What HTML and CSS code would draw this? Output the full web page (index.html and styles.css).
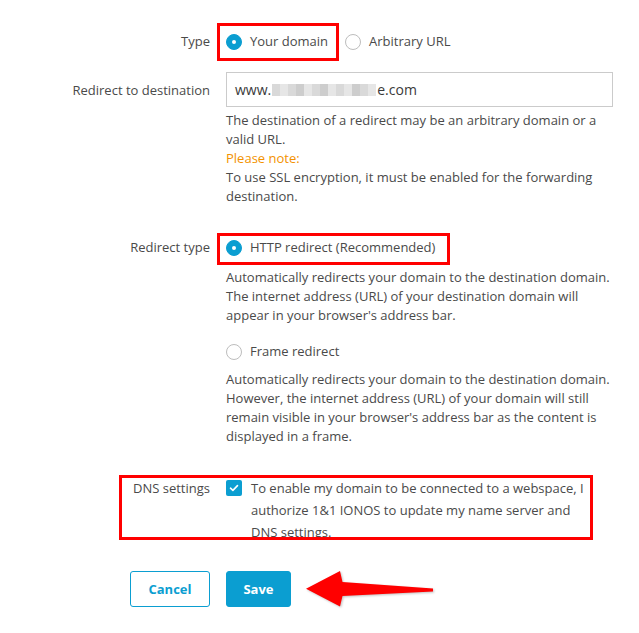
FILE: index.html
```html
<!DOCTYPE html>
<html>
<head>
    <title>Domain forwarding</title>
    <link rel="stylesheet" href="styles.css">
</head>
<body>
    <div class="form">
        <div class="row">
            <div class="label">Type</div>
            <div class="field options">
                <label class="opt marked mark-type"><span class="radio on"></span>Your domain</label>
                <label class="opt"><span class="radio"></span>Arbitrary URL</label>
            </div>
        </div>

        <div class="row row-dest">
            <div class="label label-input">Redirect to destination</div>
            <div class="field">
                <div class="input">www.<span class="blur"><i class="b1"></i><i class="b2"></i><i class="b1"></i><i class="b3"></i><i class="b2"></i><i class="b1"></i><i class="b3"></i><i class="b2"></i><i class="b1"></i><i class="b2"></i><i class="b3"></i><i class="b1"></i><i class="b2"></i></span>e.com</div>
                <p class="help">The destination of a redirect may be an arbitrary domain or a valid URL.</p>
                <p class="help note">Please note:</p>
                <p class="help">To use SSL encryption, it must be enabled for the forwarding destination.</p>
            </div>
        </div>

        <div class="row row-type">
            <div class="label">Redirect type</div>
            <div class="field">
                <label class="opt marked mark-redirect"><span class="radio on"></span>HTTP redirect (Recommended)</label>
                <p class="desc">Automatically redirects your domain to the destination domain. The internet address (URL) of your destination domain will appear in your browser's address bar.</p>
                <label class="opt opt-frame"><span class="radio"></span>Frame redirect</label>
                <p class="desc desc-frame">Automatically redirects your domain to the destination domain. However, the internet address (URL) of your domain will still remain visible in your browser's address bar as the content is displayed in a frame.</p>
            </div>
        </div>

        <div class="row row-dns">
            <div class="label">DNS settings</div>
            <div class="field check-line">
                <span class="checkbox">
                    <svg width="10" height="8" viewBox="0 0 10 8"><path d="M1.5 4.2 L3.9 6.4 L8.5 1.6" fill="none" stroke="#fff" stroke-width="1.6" stroke-linecap="round" stroke-linejoin="round"/></svg>
                </span>
                <span>To enable my domain to be connected to a webspace, I authorize 1&amp;1 IONOS to update my name server and DNS settings.</span>
            </div>
        </div>

        <div class="actions">
            <button class="btn btn-cancel">Cancel</button>
            <button class="btn btn-save">Save</button>
            <svg class="arrow" width="134" height="40" viewBox="0 0 134 40">
                <path d="M2 19.7 L36 2 L38.5 13 L129 19.5 L129 22.5 L38.5 27 L36 37.5 Z" fill="#f00"/>
            </svg>
        </div>
    </div>
</body>
</html>
```

FILE: styles.css
```css
body {
    margin: 0;
    font-family: "Open Sans", sans-serif;
    font-size: 13px;
    color: #4a4a4a;
    background: #fff;
}
.form {
    padding-top: 32px;
}
.row {
    display: grid;
    grid-template-columns: 210px 387px;
    column-gap: 16px;
    line-height: 19px;
    position: relative;
}
.label {
    text-align: right;
}
.options {
    display: flex;
    gap: 17px;
}
.opt {
    display: flex;
    align-items: center;
    gap: 8px;
    height: 19px;
    width: max-content;
    position: relative;
}
.radio {
    width: 16px;
    height: 16px;
    box-sizing: border-box;
    border-radius: 50%;
    border: 1px solid #bdbdbd;
    background: #fff;
    position: relative;
}
.radio.on {
    border-color: #0b9ed1;
    background: #0b9ed1;
}
.radio.on::after {
    content: '';
    position: absolute;
    left: 5px;
    top: 5px;
    width: 4px;
    height: 4px;
    border-radius: 50%;
    background: #fff;
}

/* red annotation frames */
.marked::after,
.row-dns::after {
    content: '';
    position: absolute;
    border: 3px solid #f00;
}
.mark-type::after {
    left: -9px;
    right: -11px;
    top: -9px;
    bottom: -10px;
}
.mark-redirect::after {
    left: -9px;
    right: -15px;
    top: -5px;
    bottom: -8px;
}
.row-dns::after {
    left: 119px;
    width: 468px;
    top: -2px;
    bottom: 3px;
}

.row-dest {
    margin-top: 21px;
}
.label-input {
    padding-top: 9px;
}
.input {
    height: 35px;
    box-sizing: border-box;
    border: 1px solid #cbcbcb;
    padding: 0 8px;
    display: flex;
    align-items: center;
    font-size: 14px;
    color: #3a3a3a;
}
.blur {
    display: inline-flex;
    align-items: center;
    height: 12px;
    margin: 0 1px;
}
.blur i {
    display: block;
    width: 8px;
    height: 12px;
}
.blur .b1 { background: #d9d9d9; }
.blur .b2 { background: #e6e6e6; }
.blur .b3 { background: #cdcdcd; }
.help,
.desc {
    margin: 0;
    line-height: 19px;
}
.help:first-of-type {
    margin-top: 4px;
}
.note {
    color: #f39200;
}

.row-type {
    margin-top: 32px;
}
.desc {
    margin-top: 11px;
}
.opt-frame {
    margin-top: 17px;
}
.desc-frame {
    margin-top: 9px;
}

.row-dns {
    margin-top: 31px;
    line-height: 22px;
}
.check-line {
    display: flex;
    gap: 9px;
    padding-right: 24px;
}
.checkbox {
    flex: none;
    width: 16px;
    height: 16px;
    margin-top: 3px;
    border-radius: 2px;
    background: #0b9ed1;
    display: flex;
    align-items: center;
    justify-content: center;
}

.actions {
    display: flex;
    align-items: center;
    gap: 16px;
    margin-top: 26px;
    padding-left: 130px;
}
.btn {
    height: 36px;
    padding: 0 17px;
    border: 1px solid #0b9ed1;
    border-radius: 3px;
    font-family: "Open Sans", sans-serif;
    font-size: 13px;
    font-weight: bold;
    cursor: pointer;
}
.btn-cancel {
    background: #fff;
    color: #0b9ed1;
    width: 80px;
}
.btn-save {
    background: #0b9ed1;
    color: #fff;
    width: 65px;
    padding: 0;
}
.arrow {
    margin-left: -3px;
    filter: drop-shadow(1px 1px 1px rgba(0,0,0,0.25));
}
```
